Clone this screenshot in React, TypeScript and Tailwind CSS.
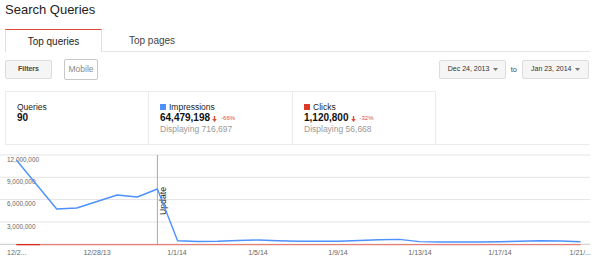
import React from 'react';

// Daily values in chart space (svg y), Dec 24 .. Jan 21
const impressions = [6, 30.5, 55, 54, 47.5, 41, 43, 35, 86.7, 87.5, 87.3, 86.5, 86, 86.8, 87.2, 87.3, 87.3, 86.5, 85.8, 85.4, 87.6, 88, 88, 88, 87.8, 87.2, 86.8, 87, 87.8];
const xAt = (i: number) => 16.4 + 20.15 * i;

const gridYs = [1, 23.3, 45.6, 68];
const yLabels = ['12,000,000', '9,000,000', '6,000,000', '3,000,000'];
const xLabels = [
    { x: 97, text: '12/28/13' },
    { x: 177, text: '1/1/14' },
    { x: 258, text: '1/5/14' },
    { x: 338, text: '1/9/14' },
    { x: 420, text: '1/13/14' },
    { x: 500, text: '1/17/14' },
];

const DownArrow: React.FC = () => (
    <svg width="5" height="6" viewBox="0 0 5 6" className="ml-[2px] mt-[1px]">
        <path d="M1.8 0h1.4v3h1.6L2.5 6 0.2 3h1.6z" fill="#dd4b39" />
    </svg>
);

const Caret: React.FC = () => (
    <svg width="5" height="3" viewBox="0 0 5 3" className="ml-[4px]">
        <path d="M0 0h5L2.5 3z" fill="#777" />
    </svg>
);

const StatCell: React.FC<{ label: string; color?: string; value: string; change?: string; sub?: string; width: string }> = ({ label, color, value, change, sub, width }) => (
    <div className={`${width} h-full border-r border-[#ebebeb] pl-[11px] pt-[10px]`}>
        <div className="flex items-center text-[8.5px] leading-[10px] text-[#222]">
            {color && <span className="w-[6px] h-[6px] mr-[3px]" style={{ backgroundColor: color }} />}
            {label}
        </div>
        <div className="flex items-center leading-[12px]">
            <span className="text-[10px] font-bold text-[#111]">{value}</span>
            {change && (
                <>
                    <DownArrow />
                    <span className="ml-[4px] text-[6px] text-[#dd4b39]">{change}</span>
                </>
            )}
        </div>
        {sub && <div className="text-[8.5px] leading-[10px] text-[#999]">{sub}</div>}
    </div>
);

const Chart: React.FC = () => {
    const points = impressions.map((y, i) => `${xAt(i).toFixed(1)},${y}`).join(' ');
    return (
        <svg width="600" height="104" viewBox="0 0 600 104" className="block">
            {gridYs.map(y => (
                <line key={y} x1="0" x2="590" y1={y} y2={y} stroke="#e3e3e3" strokeWidth="1" />
            ))}
            {yLabels.map((t, i) => (
                <text key={t} x="7" y={gridYs[i] + 6.7} fontSize="6.4" fill="#666">{t}</text>
            ))}
            <line x1="0" x2="590" y1="90.3" y2="90.3" stroke="#c8c8c8" strokeWidth="1" />
            {/* annotation */}
            <line x1="157.4" x2="157.4" y1="1" y2="90" stroke="#a8a8a8" strokeWidth="1" />
            <text transform="translate(166.3,47) rotate(-90)" textAnchor="middle" fontSize="8.7" fill="#222">Update</text>
            <polyline points={points} fill="none" stroke="#4d90fe" strokeWidth="1.4" strokeLinejoin="round" />
            <line x1="16.4" x2="580.6" y1="90.6" y2="90.6" stroke="#e57f75" strokeWidth="1.4" />
            <line x1="16.4" x2="40" y1="90.6" y2="90.6" stroke="#dc2a18" strokeWidth="1.2" />
            <text x="7" y="101" fontSize="7" fill="#666">12/2...</text>
            {xLabels.map(l => (
                <text key={l.text} x={l.x} y="101" fontSize="7" fill="#666" textAnchor="middle">{l.text}</text>
            ))}
            <text x="591" y="101" fontSize="7" fill="#666" textAnchor="end">1/21/...</text>
        </svg>
    );
};

const App: React.FC = () => {
    return (
        <div className="w-[600px] h-[258px] overflow-hidden bg-white font-['Liberation_Sans',Arial,sans-serif] text-[#222]">
            <div className="pl-[5px] pt-[2px] text-[13px] leading-[16px] text-[#222]">Search Queries</div>

            {/* tabs */}
            <div className="ml-[5px] mt-[11px] w-[585px] h-[23px] flex border-b border-[#e5e5e5]">
                <div className="w-[97px] h-[23px] -mb-px bg-white border-t border-t-[#dd4b39] border-x border-x-[#e0e0e0] flex items-center justify-center text-[10px] text-[#222]">
                    Top queries
                </div>
                <div className="w-[100px] flex items-center justify-center text-[10px] text-[#444]">Top pages</div>
            </div>

            {/* filters + dates */}
            <div className="mt-[7px] h-[21px] flex items-center pl-[5px] pr-[11px]">
                <button className="w-[47px] h-[19px] bg-[#f5f5f5] border border-[#dcdcdc] rounded-[2px] text-[7px] font-bold text-[#444]">
                    Filters
                </button>
                <button className="ml-[12px] w-[34px] h-[21px] bg-white border border-[#c8c8c8] rounded-[2px] text-[8.5px] text-[#888]">
                    Mobile
                </button>
                <div className="ml-auto flex items-center">
                    <button className="w-[67px] h-[19px] flex items-center pl-[8px] bg-[#f5f5f5] border border-[#dcdcdc] rounded-[2px] text-[7px] text-[#333]">
                        Dec 24, 2013<Caret />
                    </button>
                    <span className="mx-[5px] text-[7.5px] text-[#444]">to</span>
                    <button className="w-[67px] h-[19px] flex items-center pl-[8px] bg-[#f5f5f5] border border-[#dcdcdc] rounded-[2px] text-[7px] text-[#333]">
                        Jan 23, 2014<Caret />
                    </button>
                </div>
            </div>

            {/* totals */}
            <div className="ml-[5px] mt-[11px] w-[585px] h-[54px] flex border-b border-[#ebebeb]">
                <div className="flex border-t border-l border-[#ebebeb]">
                    <StatCell width="w-[143px]" label="Queries" value="90" />
                    <StatCell width="w-[144px]" label="Impressions" color="#4d90fe" value="64,479,198" change="-66%" sub="Displaying 716,697" />
                    <StatCell width="w-[143px]" label="Clicks" color="#dd3b28" value="1,120,800" change="-32%" sub="Displaying 56,668" />
                </div>
            </div>

            <div className="mt-[9px]">
                <Chart />
            </div>
        </div>
    );
};

export default App;
